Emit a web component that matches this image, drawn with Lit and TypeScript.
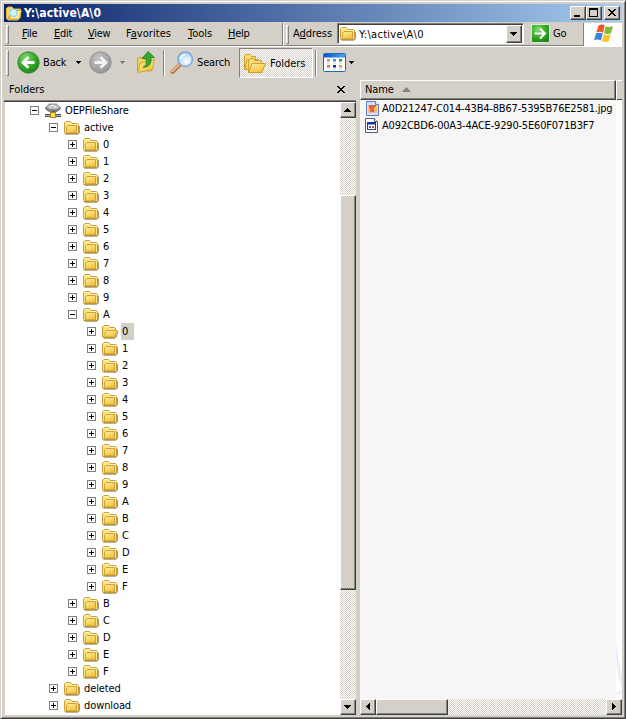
import { LitElement, html, css, svg } from 'lit';
import { customElement } from 'lit/decorators.js';

interface Node { label: string; level: number; open?: boolean; icon?: string; selected?: boolean }

const digits = ['0', '1', '2', '3', '4', '5', '6', '7', '8', '9'];
const letters = ['B', 'C', 'D', 'E', 'F'];
const nodes: Node[] = [
  { label: 'OEPFileShare', level: 0, open: true, icon: 'drive' },
  { label: 'active', level: 1, open: true },
  ...digits.map((label) => ({ label, level: 2 })),
  { label: 'A', level: 2, open: true },
  ...[...digits, 'A', ...letters].map((label, i) => ({ label, level: 3, selected: i === 0, icon: i === 0 ? 'folderopen' : 'folder' })),
  ...letters.map((label) => ({ label, level: 2 })),
  { label: 'deleted', level: 1 },
  { label: 'download', level: 1 },
];

const icon = (name: string, w: number, h: number) =>
  html`<svg class="i" width=${w} height=${h} viewBox="0 0 ${w} ${h}"><use href="#${name}"></use></svg>`;

const symbols = svg`
  <linearGradient id="gold" x1="0" y1="0" x2="0.6" y2="1"><stop offset="0" stop-color="#fdf0a0"/><stop offset="1" stop-color="#f3c23a"/></linearGradient>
  <radialGradient id="green" cx="0.38" cy="0.3" r="0.75"><stop offset="0" stop-color="#8bdb78"/><stop offset="0.5" stop-color="#3cae2c"/><stop offset="1" stop-color="#1b8418"/></radialGradient>
  <radialGradient id="gray" cx="0.4" cy="0.3" r="0.75"><stop offset="0" stop-color="#c4c4c4"/><stop offset="1" stop-color="#929292"/></radialGradient>
  <radialGradient id="lens" cx="0.6" cy="0.65" r="0.7"><stop offset="0" stop-color="#fff"/><stop offset="1" stop-color="#9cd2f8"/></radialGradient>
  <linearGradient id="bar" x1="0" x2="1"><stop offset="0" stop-color="#0b55c4"/><stop offset="1" stop-color="#4aa5f0"/></linearGradient>
  <g id="folder">
    <path d="M1 13.5 Q0.5 13.5 0.5 12.5V3L2 1.5H6.5L8 3.5H13.5L14.5 4.5V12.5Q14.5 13.5 13.5 13.5Z" fill="#fbe27c" stroke="#c8a040"/>
    <path d="M1.5 14.2H14L15.4 12.8V6" fill="none" stroke="#735b20" opacity="0.7"/>
    <path d="M2.5 12.8V7L4 5.5H12.5V12.8Z" fill="url(#gold)" stroke="#cfa136"/>
    <path d="M1.5 3.8 2.5 2.5H6L7.5 4.5H13" fill="none" stroke="#fff6b8"/>
  </g>
  <g id="folderopen">
    <path d="M0.5 12.5V3L2 1.5H6.5L8 3.5H12.5L13.5 5V12.5L12.5 13.5H1Z" fill="#f8dd77" stroke="#c09a2e"/>
    <path d="M2 14.2H13L14.2 13 16 7" fill="none" stroke="#735b20" opacity="0.7"/>
    <path d="M1.5 13 4 6.5H15L12.7 13Z" fill="url(#gold)" stroke="#d1a936"/>
    <path d="M1.5 3.8 2.5 2.5H6L7.5 4.5H12" fill="none" stroke="#fff6b8"/>
  </g>
  <g id="drive">
    <path d="M0.5 4.5 4.5 1H11.5L15.5 4.5V6L12 8.5H4L0.5 6Z" fill="#858585" stroke="#666" stroke-width="0.7"/>
    <path d="M1.5 4 5 1.5H11.5L15 4 12 6H4.5Z" fill="#c6c6c6"/>
    <path d="M5 3.2 8 2.2 11 4.5" fill="none" stroke="#fff"/>
    <rect x="7" y="8" width="3" height="3" fill="#555"/>
    <rect x="0" y="11" width="16" height="3" fill="#46555a"/><rect x="0" y="12" width="16" height="1" fill="#a7b5b8"/>
    <rect x="5.5" y="9.5" width="5" height="5" fill="#ffd94a" stroke="#b08716"/>
  </g>
  <g id="titlefolder">
    <path d="M0.5 13V3.5L2 2H6L7.5 4H14.5V12L12 15H2Z" fill="#f6d76a" stroke="#e2b63c"/>
    <path d="M3 14 5 5.5H15.5L13 14Z" fill="#fceea0" stroke="#c99b2c" stroke-width="0.8"/>
    <path d="M4.2 11.2 2.2 13.5" stroke="#e79b51" stroke-width="2"/>
    <circle cx="7.5" cy="7.8" r="3.8" fill="#d0f2fa" stroke="#8cc6e0"/>
  </g>
  <g id="back"><circle cx="11.5" cy="11.5" r="10.7" fill="url(#green)" stroke="#2c8a27" stroke-width="0.9"/>
    <path d="M17.5 11.5H7M11.5 6.2 6 11.5 11.5 16.8" fill="none" stroke="#fff" stroke-width="2.8"/></g>
  <g id="fwd"><circle cx="11.5" cy="11.5" r="10.7" fill="url(#gray)" stroke="#8c8c8c" stroke-width="0.9"/>
    <path d="M5.5 11.5H16M11.5 6.2 17 11.5 11.5 16.8" fill="none" stroke="#f1f1f1" stroke-width="2.8"/></g>
  <g id="up">
    <path d="M0.5 20V8L2 6.5H6L7.5 8.5H14.5V20Z" fill="#f2d063" stroke="#c9a233"/>
    <path d="M0.5 21.5 3 12 17.5 8.5 15.5 18.5Z" fill="url(#gold)" stroke="#d1a936"/>
    <path d="M6 16.5Q10 15 9.4 7.5H5.2L11 0.5 17.5 6.5H13.8Q15.5 15.5 6 16.5Z" fill="#35ab2e" stroke="#19801b" stroke-width="0.8"/>
  </g>
  <g id="search">
    <path d="M9.5 14 2.5 21" stroke="#b87a4d" stroke-width="4" stroke-linecap="round"/>
    <path d="M9 13.6 2.3 20.3" stroke="#f0b684" stroke-width="2" stroke-linecap="round"/>
    <circle cx="15.2" cy="8.2" r="7.2" fill="url(#lens)" stroke="#82a5d8" stroke-width="1.5"/>
    <path d="M10.5 8Q11 4 15 3.7" fill="none" stroke="#fff" stroke-width="1.4"/>
  </g>
  <g id="folders">
    <path d="M0.5 15.5V2L2 0.5H6L7.5 2.5H11.5V15Z" fill="#f8dc76" stroke="#d1a12d"/>
    <path d="M0.8 15.5 3 5.5H14L12 15.5Z" fill="url(#gold)" stroke="#d1a12d"/>
    <path d="M4.5 18.5V6L6 4.5H9.5L11 6.5H17.5V18Z" fill="#f8dc76" stroke="#d1a12d"/>
    <path d="M4.8 18.5 8 9.5H21.5L18 18.5Z" fill="url(#gold)" stroke="#d1a12d"/>
  </g>
  <g id="views">
    <rect x="0.5" y="0.5" width="22" height="18" rx="1" fill="#fff" stroke="#1c67c6"/>
    <rect x="1" y="1" width="21" height="3.5" fill="url(#bar)"/>
    <rect x="4" y="6" width="3" height="2.5" fill="#8fa0b8"/><rect x="10" y="6" width="3" height="2.5" fill="#4e88e0"/><rect x="16" y="6" width="3" height="2.5" fill="#2e9a42"/>
    <rect x="4" y="12" width="3" height="2.5" fill="#ef6a48"/><rect x="10" y="12" width="3" height="2.5" fill="#12337f"/><rect x="16" y="12" width="3" height="2.5" fill="#d0a13a"/>
    <path d="M4 10H7M10 10H13M16 10H19M4 16H7M10 16H13M16 16H19" stroke="#d4d4d4"/>
  </g>
  <g id="go"><rect x="0.5" y="0.5" width="18" height="18" rx="1.5" fill="url(#green)" stroke="#d5f0d0"/>
    <path d="M3.5 9.5H13.5M9 4.5 14 9.5 9 14.5" fill="none" stroke="#fff" stroke-width="2"/></g>
  <g id="flag">
    <path d="M4.5 1.5Q8 -0.5 10.8 1.5L9 8.7Q6 7 2.3 8.5Z" fill="#ec5a2c"/>
    <path d="M11.8 2.3Q15 3.7 19 2.1L17 9.3Q13.5 10.8 10 9.3Z" fill="#7dbb36"/>
    <path d="M2 9.5Q5.6 8.1 8.8 9.8L6.9 16.5Q3.8 14.8 0 16.3Z" fill="#3f7fe0"/>
    <path d="M9.8 10.3Q13 11.9 16.7 10.3L14.9 17.3Q11 18.8 7.9 17.1Z" fill="#fbc52c"/>
  </g>
  <g id="jpg">
    <path d="M1.5 0.5H10.5L13.5 3.5V14.5H1.5Z" fill="#cfe2ff" stroke="#5c80bd"/>
    <path d="M10.5 0.5V3.5H13.5" fill="#fff" stroke="#5c80bd"/>
    <rect x="3" y="4" width="9" height="8" fill="#f2b894"/><rect x="4" y="4" width="7" height="3" fill="#d9653c"/><rect x="5" y="7" width="4" height="4" fill="#e4682e"/><rect x="9" y="6" width="3" height="3" fill="#f7b84c"/>
  </g>
  <g id="file">
    <path d="M0.5 0.5H9.5L12.5 3.5V14.5H0.5Z" fill="#fff" stroke="#555b6a"/>
    <path d="M9.5 0.5V3.5H12.5" fill="#fff" stroke="#555b6a"/>
    <rect x="2.5" y="4.5" width="8" height="7" fill="#fff" stroke="#33415e"/><rect x="2" y="4" width="9" height="2.5" fill="#1733a5"/>
    <rect x="4" y="8" width="2" height="2" fill="#3a70c9"/><rect x="7" y="8" width="2" height="2" fill="#d04c3c"/>
  </g>
  <g id="tu"><path d="M0 4H7V3H6V2H5V1H4V0H3V1H2V2H1V3H0Z"/></g>
  <g id="td"><path d="M0 0H7V1H6V2H5V3H4V4H3V3H2V2H1V1H0Z"/></g>
  <g id="tl"><path d="M4 0V7H3V6H2V5H1V4H0V3H1V2H2V1H3V0Z"/></g>
  <g id="tr"><path d="M0 0V7H1V6H2V5H3V4H4V3H3V2H2V1H1V0Z"/></g>
  <g id="caret"><path d="M0 0H5V1H4V2H3V3H2V2H1V1H0Z"/></g>
  <g id="x"><path d="M0 0H2V1H3V2H5V1H6V0H8V1H7V2H6V3H5V4H6V5H7V6H8V7H6V6H5V5H3V6H2V7H0V6H1V5H2V4H3V3H2V2H1V1H0Z"/></g>
  <g id="min"><path d="M0 7H6V9H0Z"/></g>
  <g id="max"><path d="M0 0H9V9H0ZM1 2V8H8V2Z" fill-rule="evenodd"/></g>
  <g id="sort"><path d="M0 5 4.5 0 9 5Z" fill="#858279"/></g>
`;

@customElement('app-root')
export class AppRoot extends LitElement {
  static styles = css`
    :host { display: block; width: 626px; height: 719px; overflow: hidden;
      font: 11px/17px "DejaVu Sans Condensed", "DejaVu Sans", sans-serif; font-stretch: condensed; color: #000; letter-spacing: -0.28px; }
    * { box-sizing: border-box; }
    .defs { display: block; position: absolute; }
    .i { display: block; flex: none; overflow: visible; }
    u { text-underline-offset: 1px; text-decoration-thickness: 1px; text-decoration-skip-ink: none; }
    span { white-space: nowrap; }
    .window { display: flex; flex-direction: column; width: 626px; height: 719px; background: #d4d0c8;
      border: 1px solid; border-color: #d4d0c8 #404040 #404040 #d4d0c8; box-shadow: inset 1px 1px #fff, inset -1px -1px #808080; padding: 3px 3px 3px 3px; }
    .title { height: 18px; display: flex; align-items: center; flex: none; padding: 0 2px; background: linear-gradient(90deg, #0a246a, #a6caf0); color: #fff; }
    .title b { margin-left: 2px; flex: 1; font-size: 12px; letter-spacing: 0.1px; }
    .raised { background: #d4d0c8; border: 1px solid; border-color: #fff #404040 #404040 #fff; box-shadow: inset -1px -1px #808080; display: flex; align-items: center; justify-content: center; flex: none; }
    .tb { width: 16px; height: 14px; padding: 0 1px 1px 0; }
    .close { margin-left: 2px; }
    .menubar { height: 25px; flex: none; display: flex; padding-top: 1px; border-bottom: 1px solid #fff; box-shadow: inset 0 -1px #808080; }
    .grip { width: 3px; height: 19px; border: 1px solid; border-color: #fff #808080 #808080 #fff; flex: none; margin: 2px 0 0 2px; }
    .menus { display: flex; width: 279px; border-right: 1px solid #808080; }
    .menus span { line-height: 22px; }
    .m0 { width: 32px; margin-left: 13px; } .m1 { width: 34px; } .m2 { width: 38px; } .m3 { width: 62px; letter-spacing: 0.05px; } .m4 { width: 40px; letter-spacing: 0; }
    .addr { flex: 1; display: flex; border-left: 1px solid #fff; }
    .addr > span { line-height: 22px; }
    .lab { width: 44px; margin-left: 4px; letter-spacing: -0.05px; }
    .combo { width: 187px; height: 21px; display: flex; align-items: center; background: #fff; border: 1px solid; border-color: #808080 #fff #fff #808080; box-shadow: inset 1px 1px #404040; padding: 1px 1px 0 2px; }
    .combo span { margin-left: 3px; flex: 1; letter-spacing: 0.28px; }
    .drop { width: 16px; height: 18px; padding: 0 1px 1px 0; }
    .goicon { margin: 1px 0 0 7px; }
    .go { margin-left: 3px; }
    .logo { width: 39px; margin-left: auto; background: #fff; border-left: 1px solid #808080; height: 23px; padding: 1px 0 0 10px; }
    .toolbar { height: 31px; display: flex; align-items: center; flex: none; }
    .toolbar .grip { height: 26px; margin-top: 0; }
    .bk { margin-left: 8px; } .bt { width: 32px; margin-left: 3px; letter-spacing: -0.15px; }
    .fw { margin-left: 8px; } .dis { fill: #808080; margin-left: 8px; }
    .car { margin-left: 1px; }
    .upi { margin-left: 12px; }
    .sep { width: 2px; height: 26px; border-left: 1px solid #808080; border-right: 1px solid #fff; flex: none; }
    .s1 { margin-left: 7px; } .sr { margin-left: 5px; } .st { margin-left: 4px; width: 42px; letter-spacing: -0.15px; }
    .fbtn { width: 74px; height: 30px; display: flex; align-items: center; border: 1px solid; border-color: #808080 #fff #fff #808080; padding: 2px 0 0 4px;
      background: repeating-conic-gradient(#fff 0 25%, #d4d0c8 0 50%) 0 0 / 2px 2px; }
    .fbtn span { margin-left: 4px; letter-spacing: -0.05px; }
    .s2 { margin-left: 2px; } .vw { margin-left: 6px; } .vc { margin-left: 3px; }
    .body { flex: 1; display: flex; min-height: 0; }
    .left { width: 352px; display: flex; flex-direction: column; }
    .head { height: 24px; flex: none; display: flex; justify-content: space-between; align-items: center; padding: 0 11px 0 5px; border-bottom: 1px solid #404040; box-shadow: inset 0 -1px #808080; letter-spacing: -0.05px; }
    .treewrap { flex: 1; display: flex; background: #fff; min-height: 0; border-left: 1px solid #d4d0c8; }
    .tree { flex: 1; overflow: hidden; }
    .row { height: 17px; display: flex; align-items: center; }
    .l0 { padding-left: 25px; } .l1 { padding-left: 44px; } .l2 { padding-left: 63px; } .l3 { padding-left: 82px; }
    .box { width: 9px; height: 9px; border: 1px solid #808080; margin-right: 6px; flex: none;
      background: linear-gradient(#000, #000) center / 5px 1px no-repeat; }
    .plus { background: linear-gradient(#000, #000) center / 5px 1px no-repeat, linear-gradient(#000, #000) center / 1px 5px no-repeat; }
    .row span { margin-left: 2px; padding: 0 1px; height: 17px; letter-spacing: -0.1px; }
    .row .sel { background: #d4d0c8; width: 13px; }
    .vs { width: 16px; display: flex; flex-direction: column; }
    .track { background: repeating-conic-gradient(#fff 0 25%, #d4d0c8 0 50%) 0 0 / 2px 2px; }
    .sq { width: 16px; height: 16px; padding: 0 1px 1px 0; }
    .gap { height: 77px; } .vt { height: 395px; }
    .vs .last { margin-top: auto; }
    .right { margin-left: 4px; flex: 1; display: flex; flex-direction: column; min-width: 0; padding-top: 2px; }
    .cols { height: 20px; flex: none; display: flex; }
    .name { width: 256px; justify-content: flex-start; padding-left: 4px; padding-bottom: 2px; }
    .name span { width: 37px; letter-spacing: -0.1px; }
    .rest { flex: 1; border: solid #fff; border-width: 1px 0 0 1px; box-shadow: inset 0 -1px #404040; }
    .files { flex: 1; background: linear-gradient(90deg, #f6f6f6 256px, #fff 256px); display: flex; min-height: 0; }
    .list { width: 256px; }
    .mark { align-self: flex-end; display: block; }
    .file { display: flex; height: 17px; align-items: center; padding-left: 5px; }
    .file .fi { width: 17px; }
    .file span { line-height: 17px; letter-spacing: -0.19px; }
    .hs { height: 16px; display: flex; }
    .ht { width: 72px; } .hs .last { margin-left: auto; }
  `;

  row(n: Node) {
    return html`<div class="row l${n.level}"><i class="box ${n.open ? '' : 'plus'}"></i>${icon(n.icon ?? 'folder', 17, 15)}<span class=${n.selected ? 'sel' : ''}>${n.label}</span></div>`;
  }

  render() {
    return html`
      <svg class="defs" width="0" height="0"><defs>${symbols}</defs></svg>
      <div class="window">
        <div class="title">${icon('titlefolder', 16, 16)}<b>Y:\\active\\A\\0</b>
          <div class="raised tb">${icon('min', 8, 9)}</div><div class="raised tb">${icon('max', 9, 9)}</div><div class="raised tb close">${icon('x', 8, 7)}</div>
        </div>
        <div class="menubar">
          <div class="menus"><i class="grip"></i>
            <span class="m0"><u>F</u>ile</span><span class="m1"><u>E</u>dit</span><span class="m2"><u>V</u>iew</span><span class="m3">F<u>a</u>vorites</span><span class="m4"><u>T</u>ools</span><span><u>H</u>elp</span>
          </div>
          <div class="addr"><i class="grip"></i><span class="lab">A<u>d</u>dress</span>
            <div class="combo">${icon('folder', 16, 16)}<span>Y:\\active\\A\\0</span><div class="raised drop">${icon('td', 7, 4)}</div></div>
            <div class="goicon">${icon('go', 19, 19)}</div><span class="go">Go</span>
            <div class="logo">${icon('flag', 19, 19)}</div>
          </div>
        </div>
        <div class="toolbar">
          <i class="grip"></i><div class="bk">${icon('back', 23, 23)}</div><span class="bt">Back</span><div class="car">${icon('caret', 5, 3)}</div>
          <div class="fw">${icon('fwd', 23, 23)}</div><div class="dis">${icon('caret', 5, 3)}</div>
          <div class="upi">${icon('up', 19, 23)}</div><i class="sep s1"></i>
          <div class="sr">${icon('search', 23, 23)}</div><span class="st">Search</span>
          <div class="fbtn">${icon('folders', 22, 20)}<span>Folders</span></div><i class="sep s2"></i>
          <div class="vw">${icon('views', 23, 19)}</div><div class="vc">${icon('caret', 5, 3)}</div>
        </div>
        <div class="body">
          <div class="left">
            <div class="head"><span>Folders</span>${icon('x', 8, 7)}</div>
            <div class="treewrap">
              <div class="tree">${nodes.map((n) => this.row(n))}</div>
              <div class="vs track"><div class="raised sq">${icon('tu', 7, 4)}</div><div class="gap"></div><div class="raised vt"></div><div class="raised sq last">${icon('td', 7, 4)}</div></div>
            </div>
          </div>
          <div class="right">
            <div class="cols"><div class="raised name"><span>Name</span>${icon('sort', 9, 5)}</div><div class="rest"></div></div>
            <div class="files">
              <div class="list">
                <div class="file"><div class="fi">${icon('jpg', 15, 15)}</div><span>A0D21247-C014-43B4-8B67-5395B76E2581.jpg</span></div>
                <div class="file"><div class="fi">${icon('file', 14, 15)}</div><span>A092CBD6-00A3-4ACE-9290-5E60F071B3F7</span></div>
              </div>
              <svg class="mark" width="6" height="60" viewBox="0 0 6 60"><path d="M0 0Q2 22 6 36V50Q2 38 0 20Z" fill="#e9eef7"/><path d="M0 53 6 51V55L0 56Z" fill="#eef1f9"/></svg>
            </div>
            <div class="hs track"><div class="raised sq">${icon('tl', 4, 7)}</div><div class="raised ht"></div><div class="raised sq last">${icon('tr', 4, 7)}</div></div>
          </div>
        </div>
      </div>`;
  }
}
